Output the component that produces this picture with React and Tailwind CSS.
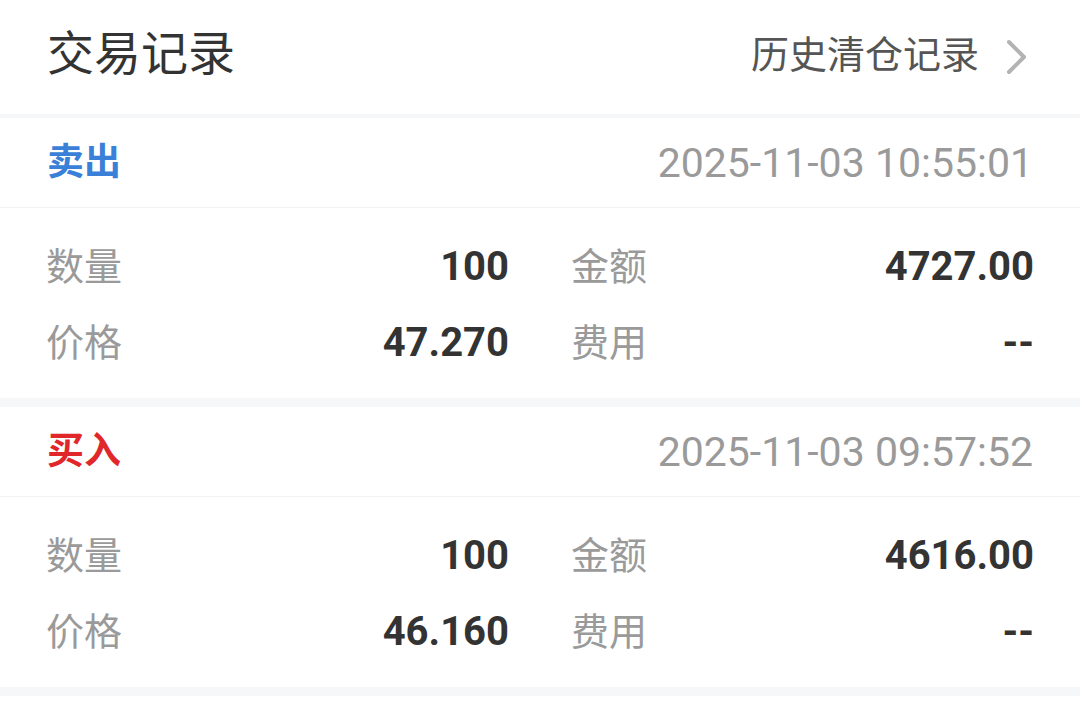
const FONT = "font-['Roboto','Noto_Sans_CJK_SC',sans-serif]";

const TRADES = [
  {
    side: "卖出",
    color: "text-[#3a7fd8]",
    time: "2025-11-03 10:55:01",
    qty: "100",
    amount: "4727.00",
    price: "47.270",
    fee: "--",
  },
  {
    side: "买入",
    color: "text-[#e0282a]",
    time: "2025-11-03 09:57:52",
    qty: "100",
    amount: "4616.00",
    price: "46.160",
    fee: "--",
  },
];

function Chevron() {
  return (
    <svg width="22" height="36" viewBox="0 0 22 36" fill="none">
      <polyline
        points="3,3 18,18 3,33"
        stroke="#b3b3b3"
        strokeWidth="4"
        strokeLinecap="round"
        strokeLinejoin="round"
      />
    </svg>
  );
}

function Cell({ label, value }) {
  return (
    <div className="flex items-center justify-between">
      <span className="text-[38px] text-[#9a9a9a]">{label}</span>
      <span className="text-[40px] font-bold text-[#333333]">{value}</span>
    </div>
  );
}

function TradeCard({ trade }) {
  return (
    <div className="bg-white">
      <div className="flex h-[90px] items-center justify-between px-[47px] border-b border-[#f2f3f5]">
        <span className={`text-[37px] font-bold ${trade.color}`}>{trade.side}</span>
        <span className="text-[41px] text-[#9a9a9a] pt-[3px]">{trade.time}</span>
      </div>
      <div className="grid grid-cols-2 gap-x-[62px] px-[46px] pt-[21px] pb-[17px]">
        <div className="grid grid-rows-[76px_76px]">
          <Cell label="数量" value={trade.qty} />
          <Cell label="价格" value={trade.price} />
        </div>
        <div className="grid grid-rows-[76px_76px]">
          <Cell label="金额" value={trade.amount} />
          <Cell label="费用" value={trade.fee} />
        </div>
      </div>
    </div>
  );
}

export default function App() {
  return (
    <div className={`${FONT} w-[1080px] h-[711px] overflow-hidden bg-white`}>
      <div className="flex h-[114px] items-center justify-between pl-[47px] pr-[52px]">
        <h1 className="text-[47px] font-normal text-[#333333] -mt-[5px]">交易记录</h1>
        <div className="flex items-center gap-[27px]">
          <span className="text-[38px] text-[#555555] -mt-[4px]">历史清仓记录</span>
          <Chevron />
        </div>
      </div>
      <div className="h-[4px] bg-[#f6f7f9]" />
      <TradeCard trade={TRADES[0]} />
      <div className="h-[9px] bg-[#f6f7f9]" />
      <TradeCard trade={TRADES[1]} />
      <div className="h-[9px] bg-[#f6f7f9]" />
    </div>
  );
}
